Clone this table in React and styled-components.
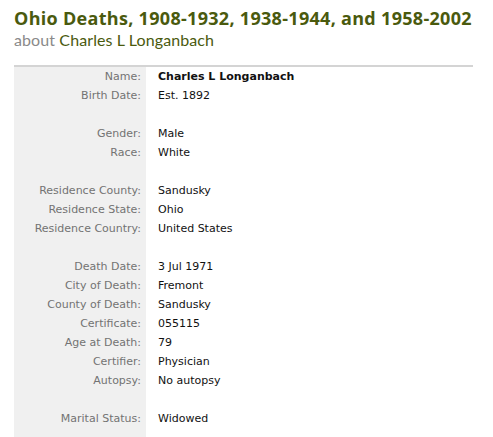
import styled, { createGlobalStyle } from "styled-components";

const GlobalStyle = createGlobalStyle`
  body {
    margin: 0;
    background: #fff;
  }
`;

const Page = styled.div`
  padding: 8px 20px 0 14px;
  width: 459px;
`;

const Title = styled.h1`
  margin: 0;
  font-family: "Open Sans", sans-serif;
  font-weight: 700;
  font-size: 18px;
  letter-spacing: 0.3px;
  line-height: 20px;
  color: #4a5a0e;
  white-space: nowrap;
`;

const Subtitle = styled.div`
  margin-top: 1px;
  font-family: Lato, "Open Sans", sans-serif;
  font-size: 16px;
  letter-spacing: 0.1px;
  line-height: 22px;
  color: #8a8a8a;
`;

const Person = styled.span`
  color: #4a5a0e;
`;

const Records = styled.div`
  margin-top: 14px;
  border-top: 2px solid #d4d4d4;
  display: grid;
  grid-template-columns: 132px 1fr;
  font-family: "DejaVu Sans", Verdana, sans-serif;
  font-size: 11px;
  line-height: 19px;
  padding-bottom: 20px;
  background: linear-gradient(to right, #f0f0f0 132px, #fff 132px);
`;

const Label = styled.div`
  text-align: right;
  padding-right: 5px;
  color: #737373;
  white-space: nowrap;
`;

const Value = styled.div`
  padding-left: 12px;
  color: #111;
  font-weight: ${(p) => (p.$bold ? 700 : 400)};
`;

const rows = [
  ["Name:", "Charles L Longanbach", true],
  ["Birth Date:", "Est. 1892"],
  null,
  ["Gender:", "Male"],
  ["Race:", "White"],
  null,
  ["Residence County:", "Sandusky"],
  ["Residence State:", "Ohio"],
  ["Residence Country:", "United States"],
  null,
  ["Death Date:", "3 Jul 1971"],
  ["City of Death:", "Fremont"],
  ["County of Death:", "Sandusky"],
  ["Certificate:", "055115"],
  ["Age at Death:", "79"],
  ["Certifier:", "Physician"],
  ["Autopsy:", "No autopsy"],
  null,
  ["Marital Status:", "Widowed"],
];

export default function App() {
  return (
    <>
      <GlobalStyle />
      <Page>
        <Title>Ohio Deaths, 1908-1932, 1938-1944, and 1958-2002</Title>
        <Subtitle>
          about <Person>Charles L Longanbach</Person>
        </Subtitle>
        <Records>
          {rows.map((r, i) =>
            r ? (
              [
                <Label key={`l${i}`}>{r[0]}</Label>,
                <Value key={`v${i}`} $bold={r[2]}>
                  {r[1]}
                </Value>,
              ]
            ) : (
              [
                <Label key={`l${i}`}>&nbsp;</Label>,
                <Value key={`v${i}`}>&nbsp;</Value>,
              ]
            )
          )}
        </Records>
      </Page>
    </>
  );
}
